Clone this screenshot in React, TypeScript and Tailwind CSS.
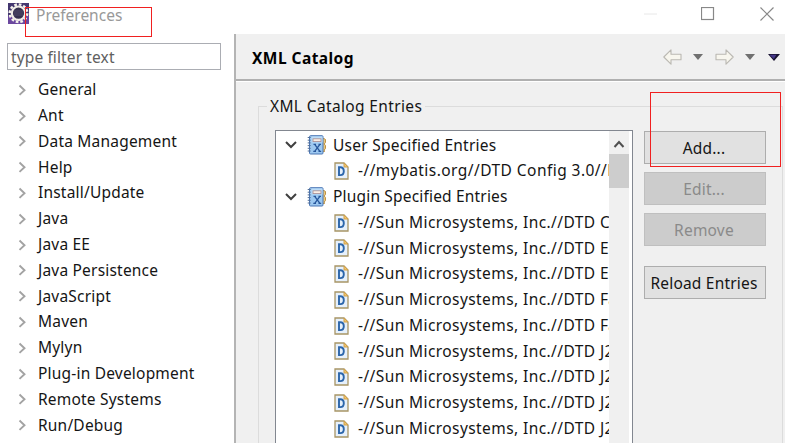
import React from "react";

const categories = [
  "General", "Ant", "Data Management", "Help", "Install/Update", "Java", "Java EE",
  "Java Persistence", "JavaScript", "Maven", "Mylyn", "Plug-in Development",
  "Remote Systems", "Run/Debug",
];

const pluginEntries = ["C", "En", "En", "Fa", "Fa", "J2", "J2", "J2", "J2"];

function EclipseIcon() {
  return (
    <svg className="block h-[21px] w-[21px]" viewBox="0 0 21 21">
      <rect width="21" height="21" fill="#43376f" />
      <rect y="13" width="21" height="8" fill="#6b489f" />
      <circle cx="10.5" cy="10.200" r="8.800" fill="none" stroke="#f6f3ec" strokeWidth="2.400" strokeDasharray="2.700 1.908" />
      <circle cx="10.5" cy="10.200" r="6.700" fill="#35304f" stroke="#f1eee8" strokeWidth="2.200" />
      <path d="M6 8h9M5.500 10h10M6 12h9" stroke="#55516f" strokeWidth=".9" />
    </svg>
  );
}

function CatalogIcon() {
  return (
    <svg className="block h-5 w-5 shrink-0" viewBox="0 0 20 20">
      <path d="M15 3.500h2l1.500 1v3L17.200 9l1.300 1.500v3L17.200 15l.3 1.500H15z" fill="#e8c67e" stroke="#b98a35" strokeWidth=".9" />
      <rect x="2.500" y=".7" width="13.500" height="18.300" rx="1" fill="#9dc8f0" stroke="#4a76b4" />
      <path d="M4.500 1.500h11v6h-11z" fill="#bcdcf7" />
      <rect x="6" y="3.800" width="8" height="2.800" fill="#fbeee4" stroke="#a58a91" strokeWidth=".8" />
      <path d="M6.500 9.300h2.500M11.500 9.300H14M6.300 16.300H9M11.500 16.300h2.700M7.700 9.300l5.200 7M12.900 9.300l-5.200 7" fill="none" stroke="#28579b" strokeWidth="1.300" />
      <path d="M.7 2.500h3M.7 5.200h3M.7 7.900h3M.7 10.600h3M.7 13.300h3M.7 16h3" stroke="#526f99" />
    </svg>
  );
}

function DtdIcon() {
  return (
    <svg className="block h-[18px] w-[15px] shrink-0" viewBox="0 0 15 18">
      <path d="M1 1h9l4 4v12H1z" fill="#e6f0fb" stroke="#a89566" strokeWidth="1.300" />
      <path d="M10 1v4h4z" fill="#f0c670" stroke="#cfa04a" />
      <path d="M5 5.200v7.900h1.200c2.700 0 3.600-1.400 3.600-3.950S8.900 5.200 6.200 5.200z" fill="none" stroke="#2b65aa" strokeWidth="1.900" />
    </svg>
  );
}

function Chevron({ open = false }: { open?: boolean }) {
  return open ? (
    <svg className="block h-3 w-3 shrink-0" viewBox="0 0 12 12">
      <path d="M1 3 6 8l5-5" fill="none" stroke="#404040" strokeWidth="2" />
    </svg>
  ) : (
    <svg className="block h-3 w-2 shrink-0" viewBox="0 0 8 12">
      <path d="m1.500 1.500 5 4.700-5 4.700" fill="none" stroke="#a3a3a3" strokeWidth="1.900" />
    </svg>
  );
}

function BackArrow({ flip = false }: { flip?: boolean }) {
  return (
    <svg className={flip ? "h-4 w-[19px] -scale-x-100" : "h-4 w-[19px]"} viewBox="0 0 19 16">
      <path d="M.8 8 8 .8v4.400h10v5.600H8v4.400z" fill="#f8f6ee" stroke="#bab8b2" strokeWidth="1.100" strokeLinejoin="round" />
    </svg>
  );
}

function Caret({ color }: { color: string }) {
  return (
    <svg className="h-[6px] w-[10px]" viewBox="0 0 10 6">
      <path d="M0 0h10L5 6z" fill={color} />
    </svg>
  );
}

function PushButton({ label, disabled = false }: { label: string; disabled?: boolean }) {
  return (
    <button
      disabled={disabled}
      className={
        disabled
          ? "h-[33px] w-[122px] border border-[#bfbfbf] bg-[#cccccc] pt-[3px] pr-[2px] tracking-[0.200px] text-[#8a8a8a]"
          : "h-[33px] w-[122px] border border-[#adadad] bg-[#e1e1e1] pt-[3px] pr-[2px] tracking-[0.200px] text-[#151515]"
      }
    >
      {label}
    </button>
  );
}

export default function App() {
  return (
    <div className="relative flex h-[443px] w-[785px] flex-col overflow-hidden bg-white font-['Noto_Sans',sans-serif] text-[15.5px] leading-none whitespace-nowrap text-[#151515]">
      <header className="flex h-[34px] shrink-0 items-start">
        <div className="mt-[3px] ml-2"><EclipseIcon /></div>
        <span className="mt-[8px] ml-[7px] text-[#999999]">Preferences</span>
        <div className="mt-[7px] mr-[11px] ml-auto flex items-center">
          <svg className="h-[14px] w-[14px]" viewBox="0 0 14 14"><path d="M1 7h13" stroke="#e8e8e8" /></svg>
          <svg className="ml-[44px] h-[14px] w-[14px]" viewBox="0 0 14 14"><rect x=".5" y=".5" width="12" height="12" fill="none" stroke="#888" strokeWidth="1.200" /></svg>
          <svg className="ml-[45px] h-[14px] w-[14px]" viewBox="0 0 14 14"><path d="m.5.5 13 13m0-13-13 13" stroke="#888" strokeWidth="1.200" /></svg>
        </div>
      </header>
      <div className="flex min-h-0 flex-1">
        <aside className="w-[234px] shrink-0 pt-[9px]">
          <div className="ml-[7px] flex h-[27px] w-[214px] items-center border border-[#abadb3] pt-[2px] pl-[3px] tracking-[0.120px] text-[#606060]">type filter text</div>
          <ul className="mt-[7px] tracking-[0.200px]">
            {categories.map((c) => (
              <li key={c} className="flex h-[25.8px] items-center pl-[18px]">
                <Chevron />
                <span className="ml-3">{c}</span>
              </li>
            ))}
          </ul>
        </aside>
        <main className="flex min-w-0 flex-1 flex-col border-l-2 border-[#b4b4b4] bg-[#f0f0f0]">
          <div className="flex h-[47px] shrink-0 items-center border-b-2 border-[#b0b0b0] pr-[5px] pl-4">
            <h1 className="pt-[5px] font-bold tracking-[0.450px] text-black">XML Catalog</h1>
            <div className="ml-auto flex items-center pt-px">
              <BackArrow />
              <span className="ml-[11px] flex"><Caret color="#707070" /></span>
              <span className="ml-[12px] flex"><BackArrow flip /></span>
              <span className="ml-[11px] flex"><Caret color="#707070" /></span>
              <svg className="ml-[13px] h-[7px] w-3" viewBox="0 0 12 7">
                <path d="M0 0h12L6 7z" fill="#17122f" />
                <path d="M1.500.8h7L5.800 5z" fill="#453789" />
              </svg>
            </div>
          </div>
          <div className="h-px shrink-0 bg-white" />
          <fieldset className="mt-[17px] mr-[2px] ml-[22px] flex min-h-0 flex-1 border border-b-0 border-[#dcdcdc] pl-4">
            <legend className="-ml-[8px] px-[3px] tracking-[0.360px]">XML Catalog Entries</legend>
            <div className="mt-[15px] flex h-[400px] w-[358px] shrink-0 border border-[#828790] bg-white pr-[3px]">
              <div className="min-w-0 flex-1 overflow-hidden pt-[2px]">
                <div className="flex h-[25.75px] items-center pl-[9px]"><Chevron open /><span className="ml-[10px]"><CatalogIcon /></span><span className="ml-[6px] tracking-[0.240px]">User Specified Entries</span></div>
                <div className="flex h-[25.75px] items-center pl-[58px]"><DtdIcon /><span className="ml-[9px] tracking-[0.450px]">-//mybatis.org//DTD Config 3.0//EN</span></div>
                <div className="flex h-[25.75px] items-center pl-[9px]"><Chevron open /><span className="ml-[10px]"><CatalogIcon /></span><span className="ml-[6px] tracking-[0.180px]">Plugin Specified Entries</span></div>
                {pluginEntries.map((s, i) => (
                  <div key={i} className="flex h-[25.75px] items-center pl-[58px]"><DtdIcon /><span className="ml-[9px] tracking-[0.410px]">-//Sun Microsystems, Inc.//DTD {s}</span></div>
                ))}
              </div>
              <div className="w-5 shrink-0 bg-[#f0f0f0]">
                <svg className="mt-[9px] ml-1 h-[9px] w-3" viewBox="0 0 12 9"><path d="m1.500 7 4.500-5 4.500 5" fill="none" stroke="#505050" strokeWidth="2" /></svg>
                <div className="mt-[5px] h-[34px] bg-[#cdcdcd]" />
              </div>
            </div>
            <div className="mt-[16px] ml-[11px] flex flex-col gap-[8px]">
              <PushButton label="Add..." />
              <PushButton label="Edit..." disabled />
              <PushButton label="Remove" disabled />
              <div className="mt-3"><PushButton label="Reload Entries" /></div>
            </div>
          </fieldset>
        </main>
      </div>
      <div className="absolute top-[7px] left-[25px] h-[30px] w-[127px] border border-[#f02020]" />
      <div className="absolute top-[92px] left-[650px] h-[75px] w-[131px] border border-[#f02020]" />
    </div>
  );
}
